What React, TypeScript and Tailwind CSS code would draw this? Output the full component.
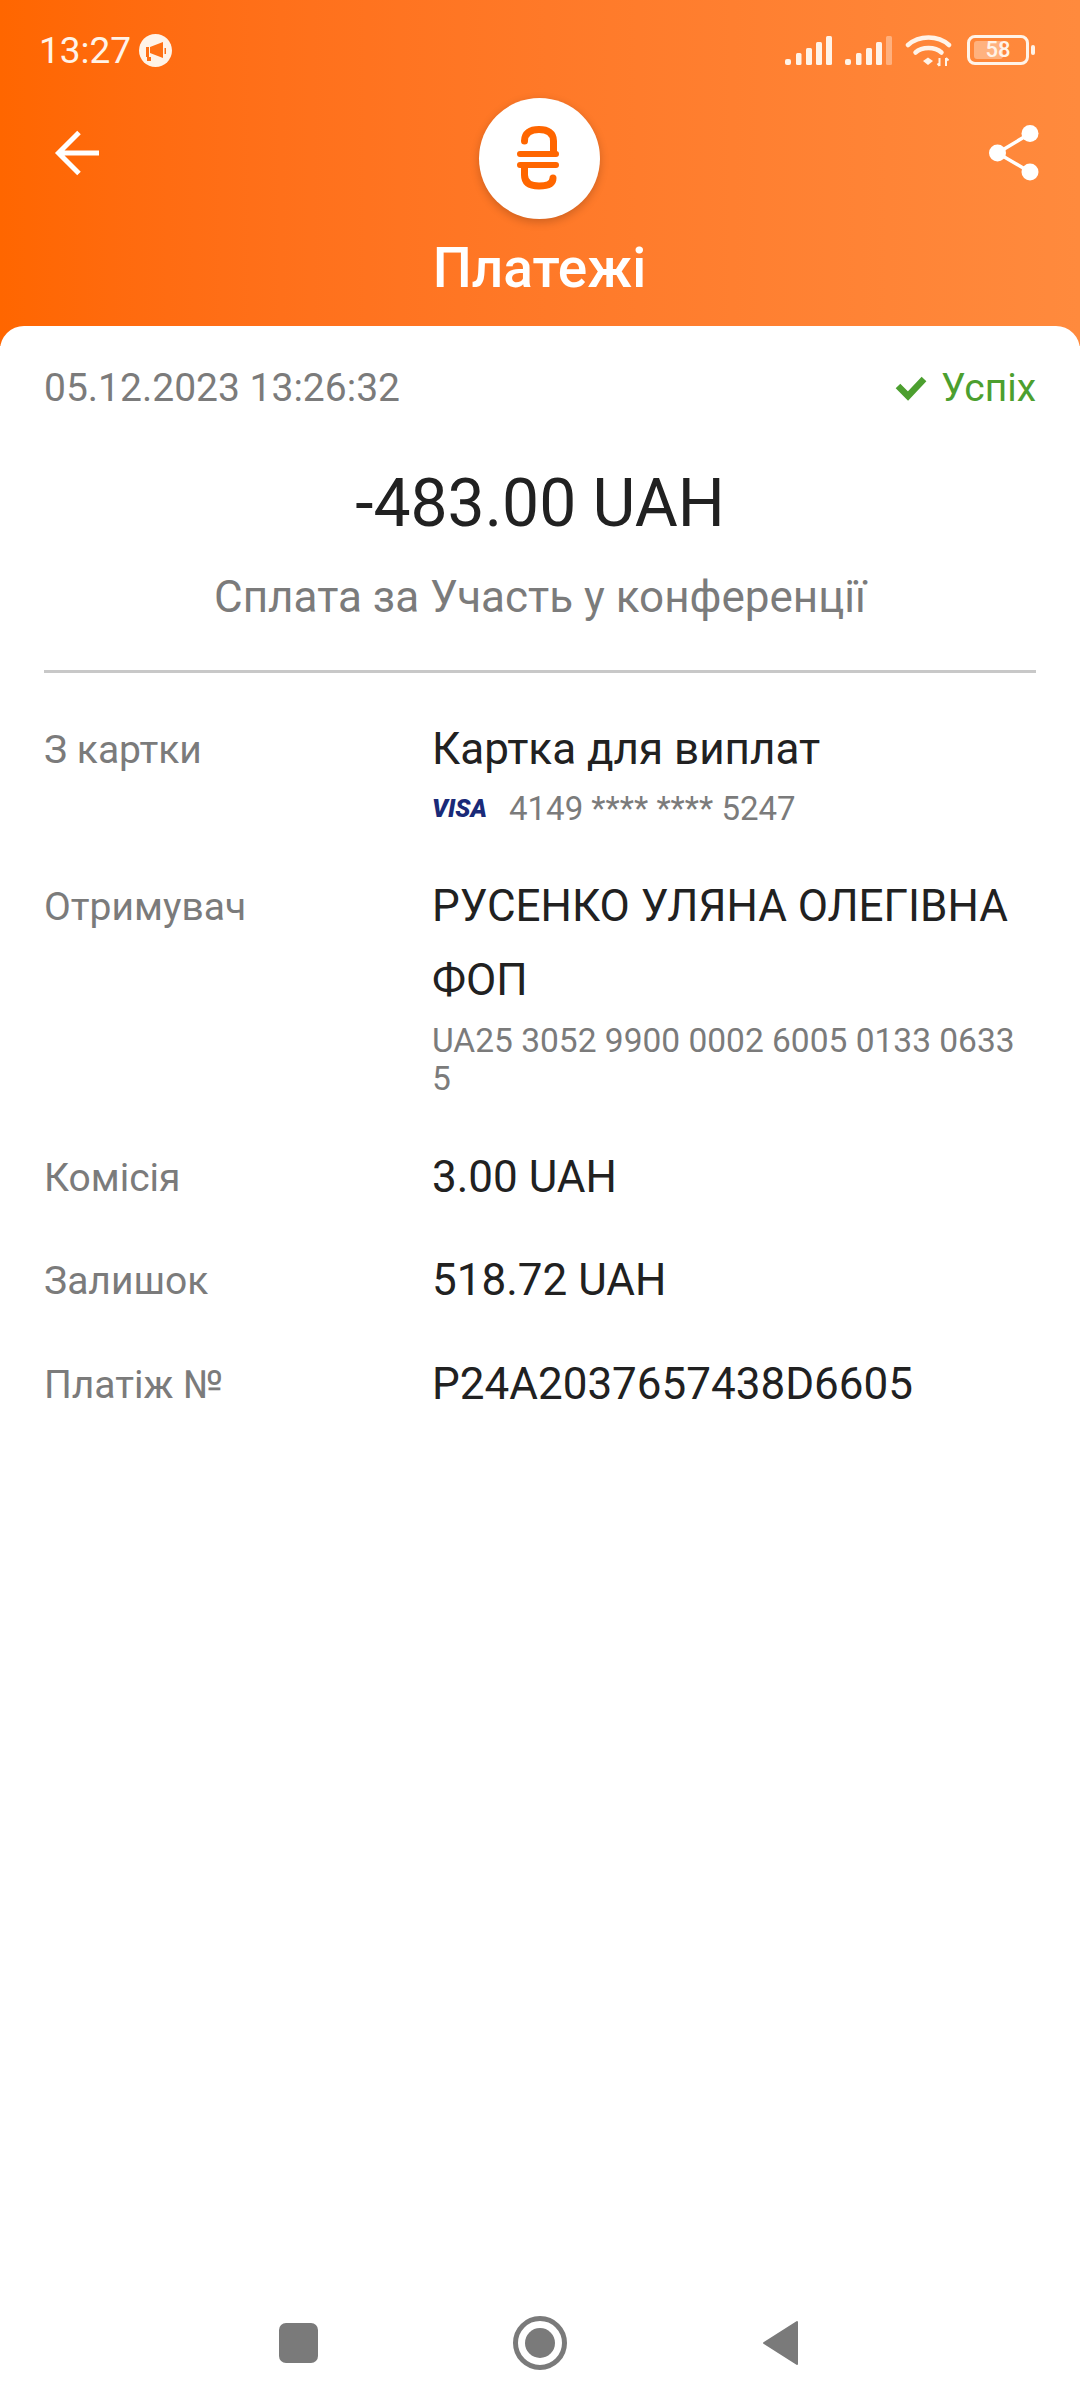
import React from 'react';

const font = { fontFamily: 'Roboto, sans-serif' };

const StatusBar: React.FC = () => (
    <div className="flex items-center justify-between h-[100px] pl-[39px] pr-[45px] text-[#fff3e8]">
        <div className="flex items-center gap-[8px]">
            <span className="text-[37px] leading-none">13:27</span>
            <svg width="33" height="33" viewBox="0 0 33 33">
                <circle cx="16.500" cy="16.500" r="16.500" fill="#fff3e8" />
                <path d="M7 13h3v10H7zM11 13l13-5v16l-13-5z" fill="#ff7014" />
                <path d="M25.500 14h1.500v6h-1.500z" fill="#ff7014" />
                <path d="M8 23h4v4H8z" fill="#ff7014" />
            </svg>
        </div>
        <div className="flex items-center">
            <svg width="107" height="29" viewBox="0 0 107 29" fill="#fff3e8">
                <rect x="0" y="23" width="6" height="6" rx="2" />
                <rect x="11" y="17" width="5.500" height="12" rx="1.500" />
                <rect x="21" y="12" width="6" height="17" rx="1.500" />
                <rect x="31" y="6" width="6" height="23" rx="1.500" />
                <rect x="41" y="0" width="6" height="29" rx="1.500" />
                <rect x="60" y="23" width="6" height="6" rx="2" />
                <rect x="71" y="17" width="5.500" height="12" rx="1.500" />
                <rect x="81" y="12" width="6" height="17" rx="1.500" />
                <rect x="91" y="6" width="6" height="23" rx="1.500" />
                <rect x="101" y="0" width="6" height="29" rx="1.500" opacity="0.4" />
            </svg>
            <svg className="ml-[13px]" width="47" height="33" viewBox="0 0 47 33" fill="none" stroke="#fff3e8" strokeWidth="4.500" strokeLinecap="round">
                <path d="M3 11C14 1 33 1 44 11" />
                <path d="M10.500 18.500C17 12.500 30 12.500 36.500 18.500" />
                <path d="M18 27l5-3.500 5 3.500-5 4z" fill="#fff3e8" stroke="none" />
                <path d="M34.500 24v8M32.500 29.500l2 2.500M41 24v8M41 24l2.500 2.500" strokeWidth="2" strokeLinecap="butt" />
            </svg>
            <div className="flex items-center gap-[2px] ml-[15px]">
                <div className="relative flex items-center justify-center w-[62px] h-[30px] rounded-[8px] border-[3px] border-[#fff3e8]">
                    <div className="absolute left-[4px] top-[3px] bottom-[3px] w-[29px] rounded-[3px] bg-[#fff3e8]/40" />
                    <span className="relative text-[22px] font-medium leading-none">58</span>
                </div>
                <div className="w-[4px] h-[10px] rounded-full bg-[#fff3e8]" />
            </div>
        </div>
    </div>
);

const Header: React.FC = () => (
    <div className="h-[346px] bg-gradient-to-r from-[#ff6600] to-[#ff8a3d]">
        <StatusBar />
        <div className="relative flex flex-col items-center">
            <div className="absolute left-[53px] top-[30px]">
                <svg width="46" height="46" viewBox="0 0 46 46" fill="none" stroke="#fff" strokeWidth="5">
                    <path d="M46 23H5.500M26 2.500L5.500 23 26 43.500" />
                </svg>
            </div>
            <div className="absolute right-[40px] top-[25px]">
                <svg width="52" height="56" viewBox="0 0 52 56" fill="#fff">
                    <circle cx="42" cy="8.500" r="8.500" />
                    <circle cx="9.500" cy="28" r="8.500" />
                    <circle cx="42" cy="47" r="8.500" />
                    <path d="M42 8.500L9.500 28 42 47" fill="none" stroke="#fff" strokeWidth="3.500" />
                </svg>
            </div>
            <div className="flex items-center justify-center w-[121px] h-[121px] mt-[-2px] ml-[-1px] rounded-full bg-white shadow-[0_3px_10px_rgba(0,0,0,0.2)]">
                <svg width="60" height="80" viewBox="50 28 60 80" fill="none" stroke="#ff6600" strokeWidth="7" strokeLinecap="round">
                    <path d="M64.500 50C64.500 42 70 38.500 79 38.500C88 38.500 93.500 42 93.500 50V62" />
                    <path d="M60 63H96M60 74H96" strokeWidth="6" />
                    <path d="M64.500 76V84C64.500 92 70 95 79 95C88 95 93 93 93 87" />
                </svg>
            </div>
            <h1 className="mt-[17px] ml-[-1px] text-[55px] leading-[64px] font-medium text-white">Платежі</h1>
        </div>
    </div>
);

const Row: React.FC<{ label: string; className?: string; children: React.ReactNode }> = ({ label, className, children }) => (
    <div className={`flex ${className ?? ''}`}>
        <div className="w-[388px] shrink-0 pt-[1px] text-[39px] leading-[74px] text-[#7b7b7b]">{label}</div>
        <div className="flex-1 min-w-0">{children}</div>
    </div>
);

const Value: React.FC<{ children: React.ReactNode }> = ({ children }) => (
    <div className="text-[44px] leading-[74px] text-[#212121]">{children}</div>
);

const NavBar: React.FC = () => (
    <div className="flex items-center justify-center gap-[195px] h-[126px] pb-[4px] pr-[3px]">
        <div className="w-[39px] h-[40px] rounded-[7px] bg-[#7a7a7a]" />
        <div className="flex items-center justify-center w-[54px] h-[54px] rounded-full border-[5px] border-[#7a7a7a]">
            <div className="w-[30px] h-[30px] rounded-full bg-[#7a7a7a]" />
        </div>
        <svg width="37" height="46" viewBox="0 0 37 46">
            <path d="M35 2v42L2 23z" fill="#7a7a7a" stroke="#7a7a7a" strokeWidth="2" strokeLinejoin="round" />
        </svg>
    </div>
);

const App: React.FC = () => {
    return (
        <div className="flex flex-col w-[1080px] h-[2408px] bg-white overflow-hidden" style={font}>
            <Header />
            <main className="flex-1 mt-[-20px] px-[44px] rounded-t-[24px] bg-white">
                <div className="flex items-center justify-between h-[122px] pt-[2px]">
                    <span className="text-[39px] text-[#7b7b7b]">05.12.2023 13:26:32</span>
                    <span className="flex items-center gap-[14px] text-[39px] text-[#4c9f2f]">
                        <svg width="32" height="26" viewBox="0 0 32 26" fill="none" stroke="#4c9f2f" strokeWidth="6.500">
                            <path d="M3 11l10 10L29 4" />
                        </svg>
                        Успіх
                    </span>
                </div>
                <div className="mt-[16px] text-center text-[66px] leading-[80px] text-[#212121]">-483.00 UAH</div>
                <div className="mt-[23px] text-center text-[44px] leading-[60px] text-[#7b7b7b]">Сплата за Участь у конференції</div>
                <div className="h-[3px] mt-[43px] bg-[#c8c8c8]" />
                <Row label="З картки" className="mt-[39px]">
                    <Value>Картка для виплат</Value>
                    <div className="flex items-center h-[46px] text-[33px] text-[#7b7b7b]">
                        <span className="w-[77px] text-[25px] font-black italic text-[#1a2a78]">VISA</span>
                        4149 **** **** 5247
                    </div>
                </Row>
                <Row label="Отримувач" className="mt-[37px]">
                    <Value>РУСЕНКО УЛЯНА ОЛЕГІВНА ФОП</Value>
                    <div className="mt-[5px] text-[33.500px] leading-[38px] text-[#7b7b7b] break-all">UA25 3052 9900 0002 6005 0133 0633 5</div>
                </Row>
                <Row label="Комісія" className="mt-[42px]">
                    <Value>3.00 UAH</Value>
                </Row>
                <Row label="Залишок" className="mt-[28px]">
                    <Value>518.72 UAH</Value>
                </Row>
                <Row label="Платіж №" className="mt-[29px]">
                    <Value>P24A2037657438D6605</Value>
                </Row>
            </main>
            <NavBar />
        </div>
    );
};

export default App;
